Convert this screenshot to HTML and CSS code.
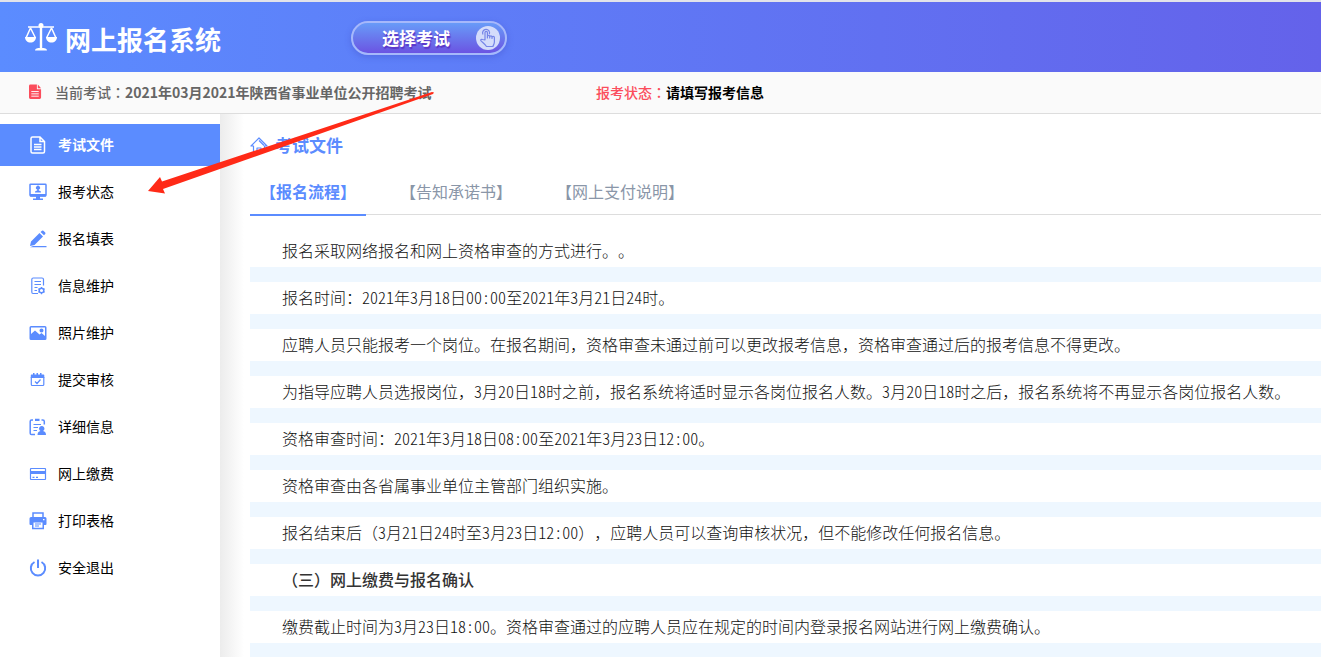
FILE: index.html
```html
<!DOCTYPE html>
<html lang="zh-CN">
<head>
<meta charset="utf-8">
<title>网上报名系统</title>
<link rel="stylesheet" href="styles.css">
</head>
<body>
<header class="header">
  <svg class="logo" viewBox="0 0 34 30" fill="none" stroke="#fff" stroke-width="1.6" aria-hidden="true">
    <path d="M4 5h26M6.500 6L2 16M6.500 6l5 10M27.500 6l-5 10M27.500 6L32 16" stroke-width="1.500"/>
    <path d="M17 3v24" stroke-width="2.400"/>
    <circle cx="17" cy="3.500" r="2.500" fill="#fff" stroke="none"/>
    <path d="M1 15h11c0 3.500-2.500 5.500-5.500 5.500S1 18.500 1 15zM22 15h11c0 3.500-2.500 5.500-5.500 5.500S22 18.500 22 15zM11 28.500c0-2 2-2.500 6-2.500s6 .5 6 2.500z" fill="#fff" stroke="none"/>
  </svg>
  <h1 class="system-name">网上报名系统</h1>
  <button class="choose" type="button">
    <span>选择考试</span>
    <svg class="choose-icon" viewBox="0 0 24 24" fill="none" stroke="#7585e8" stroke-width="1.200" stroke-linejoin="round" aria-hidden="true">
      <circle cx="12" cy="12" r="12" fill="#d4dcfb" stroke="none"/>
      <path d="M9 14V6.500a1.200 1.200 0 0 1 2.400 0V12V10.500a1.100 1.100 0 0 1 2.300 0V12v-1a1.100 1.100 0 0 1 2.300 0v1.500-1a1.100 1.100 0 0 1 2.400 0V16c0 2-1 3-1.500 4.500H10.500C9 18 6.500 16.500 4.800 14.700c-.5-1 .8-1.700 1.700-1.200z"/>
      <path d="M7 8.500a3.500 3.500 0 1 1 6.300-.3"/>
    </svg>
  </button>
</header>

<section class="status-bar">
  <svg class="status-icon" viewBox="0 0 14 16" aria-hidden="true">
    <path fill="#fb4d5c" d="M2 0h6.500v5H13v9a1.500 1.500 0 0 1-1.500 1.500h-10A1.500 1.500 0 0 1 0 14V1.500A1.500 1.500 0 0 1 1.500 0zM9.500 0L13 4H9.500z"/>
    <path d="M2.500 7.500h8M2.500 10h8M2.500 12.500h8" stroke="#fff"/>
  </svg>
  <p class="current"><span class="label">当前考试<span lang="zh-TW">：</span></span><strong>2021年03月2021年陕西省事业单位公开招聘考试</strong></p>
  <p class="state"><span class="label">报考状态<span lang="zh-TW">：</span></span><strong>请填写报考信息</strong></p>
</section>

<div class="body">
  <nav class="sidebar">
    <a class="item active" href="#"><svg viewBox="0 0 18 18"><path class="line" d="M2 2.500Q2 1 3.500 1H11l4.500 4.500v10q0 1.500-1.500 1.500H3.500Q2 17 2 15.500zM11 1v4.500h4.500M5 8.500h7.500M5 11h7.500M5 13.500h7.500"/></svg>考试文件</a>
    <a class="item" href="#"><svg viewBox="0 0 18 18"><path class="line" d="M1.700 1.200h14.600q.7 0 .7.700v10q0 1-1 1H2q-1 0-1-1v-10q0-.7.700-.7z"/><path d="M1 11h16v2.500H1zM7 13h4v2.500H7zM4 15.500h10V17H4zM6 9.500c0-1.500 1-1.800 2.200-2V6.500a2 2 0 1 1 1.600 0v1c1.200.2 2.200.5 2.200 2z"/></svg>报考状态</a>
    <a class="item" href="#"><svg viewBox="0 0 18 18"><path d="M1 16l1-4.500L10.500 3l3.500 3.500L5.500 15zM11.500 2L13 .7q.7-.6 1.400 0l1.800 1.800q.6.700 0 1.400L15 5.300zM4 16h13.500v1.200H1z"/></svg>报名填表</a>
    <a class="item" href="#"><svg viewBox="0 0 18 18"><path class="thin" d="M9 16.500H4Q2.800 16.500 2.800 15V2.500Q2.800 1 4.200 1H13q1.500 0 1.500 1.500v6M5.500 4.500H12M5.500 7.500H12M5.500 10.500h3M5.500 13.500H8"/><circle class="line" cx="12.500" cy="13.500" r="2.300"/><path class="thin" d="M12.500 9.900v1.500M12.500 15.700v1.500M9.300 11.700l1.300.7M14.400 14.600l1.300.7M9.300 15.300l1.300-.7M14.400 12.400l1.300-.7"/></svg>信息维护</a>
    <a class="item" href="#"><svg viewBox="0 0 18 18"><path fill-rule="evenodd" d="M2 2h14q1.500 0 1.500 1.500v11q0 1.500-1.500 1.500H2Q.5 16 .5 14.500v-11Q.5 2 2 2zM2 3.500V10l4-3.500 4.500 4L12.500 9 16 12V3.500zM12.500 4.500a2 2 0 1 1 0 4 2 2 0 0 1 0-4z"/></svg>照片维护</a>
    <a class="item" href="#"><svg viewBox="0 0 18 18"><path d="M2.500 3.500H4V2h1.500v1.500h2V2H9v1.500h2V2h1.500v1.500h2q.8 0 .8.800V7H1.800V4.300q0-.8.700-.8z"/><path class="thin" d="M2.300 6v7.500q0 1 1 1h10.500q1 0 1-1V6M6 10.500l2 2 3.500-4"/></svg>提交审核</a>
    <a class="item" href="#"><svg viewBox="0 0 18 18"><path class="line" d="M4 2H2.500Q1.200 2 1.200 3.500v11.700q0 1.300 1.300 1.300H6M12.500 2h1.300q1.500 0 1.500 1.500v3"/><path class="thin" d="M4.500 6.500h7.500M4.500 9.500H9M4.500 12.500H8"/><path d="M6 .8h4.500V3H6zM8.500 17c0-2.500 1-3.500 3-4a2.700 2.700 0 1 1 2.500 0c2 .5 3 1.500 3 4z"/></svg>详细信息</a>
    <a class="item" href="#"><svg viewBox="0 0 18 18"><path class="thin" d="M2 3.500h14q.5 0 .5.500v10q0 .5-.5.500H2q-.5 0-.5-.5V4q0-.5.500-.5zM3.500 12.300h2M7 12.300h2"/><path d="M1.500 6h15v3h-15z"/></svg>网上缴费</a>
    <a class="item" href="#"><svg viewBox="0 0 18 18"><path class="line" d="M4 6V1h10v5"/><path fill-rule="evenodd" d="M2 5h14q1.500 0 1.500 1.500V12q0 1-1 1H15v4.200H3V13H1.500q-1 0-1-1V6.500Q.5 5 2 5zM4.500 10.500v5.300h9v-5.300zM14 7v1.300h1.500V7z"/><path class="thin" d="M6 12h6M6 14h4"/></svg>打印表格</a>
    <a class="item" href="#"><svg viewBox="0 0 18 18"><path class="bold" d="M5.500 3a7.200 7.200 0 1 0 7 0M9 .5v8.500"/></svg>安全退出</a>
  </nav>

  <main class="main">
    <h2 class="title">
      <svg viewBox="0 0 18 16" fill="none" stroke="#5b8cff" stroke-width="1.200" stroke-linejoin="round" aria-hidden="true"><path d="M9 1L1 9h2.500v6H7v-4h4v4h3.500V9H17zM9 3.500l5 5"/></svg>
      考试文件
    </h2>
    <div class="tabs">
      <a class="tab selected" href="#">【报名流程】</a>
      <a class="tab" href="#">【告知承诺书】</a>
      <a class="tab" href="#">【网上支付说明】</a>
    </div>
    <article class="article">
      <p>报名采取网络报名和网上资格审查的方式进行。。</p>
      <p>报名时间：<span class="num">2021</span>年<span class="num">3</span>月<span class="num">18</span>日<span class="num">00:00</span>至<span class="num">2021</span>年<span class="num">3</span>月<span class="num">21</span>日<span class="num">24</span>时。</p>
      <p>应聘人员只能报考一个岗位。在报名期间，资格审查未通过前可以更改报考信息，资格审查通过后的报考信息不得更改。</p>
      <p>为指导应聘人员选报岗位，<span class="num">3</span>月<span class="num">20</span>日<span class="num">18</span>时之前，报名系统将适时显示各岗位报名人数。<span class="num">3</span>月<span class="num">20</span>日<span class="num">18</span>时之后，报名系统将不再显示各岗位报名人数。</p>
      <p>资格审查时间：<span class="num">2021</span>年<span class="num">3</span>月<span class="num">18</span>日<span class="num">08:00</span>至<span class="num">2021</span>年<span class="num">3</span>月<span class="num">23</span>日<span class="num">12:00</span>。</p>
      <p>资格审查由各省属事业单位主管部门组织实施。</p>
      <p>报名结束后（<span class="num">3</span>月<span class="num">21</span>日<span class="num">24</span>时至<span class="num">3</span>月<span class="num">23</span>日<span class="num">12:00</span>），应聘人员可以查询审核状况，但不能修改任何报名信息。</p>
      <p><strong>（三）网上缴费与报名确认</strong></p>
      <p>缴费截止时间为<span class="num">3</span>月<span class="num">23</span>日<span class="num">18:00</span>。资格审查通过的应聘人员应在规定的时间内登录报名网站进行网上缴费确认。</p>
    </article>
  </main>
</div>

<svg class="arrow" viewBox="0 0 290 104" aria-hidden="true"><path fill="#ff2a17" d="M1 101L13 87l2 4.500L285 2l2 .5-1 1.500L16 99l2 4.500z"/></svg>
</body>
</html>
```
FILE: styles.css
```css
* { box-sizing: border-box; }

body {
  margin: 0;
  min-height: 100vh;
  display: flex;
  flex-direction: column;
  position: relative;
  overflow: hidden;
  background: #fff;
  color: #000;
  font-family: "Noto Sans CJK SC", sans-serif;
  font-size: 14px;
  line-height: 20px;
  text-spacing-trim: space-all;
}

h1, h2, p { margin: 0; }
a { color: inherit; text-decoration: none; }

.header {
  display: flex;
  align-items: center;
  height: 72px;
  padding: 2px 0 0 24px;
  border-top: 2px solid #e2e3ea;
  background: linear-gradient(90deg, #5b8cff, #6462ea) padding-box;
}

.logo { width: 34px; height: 30px; margin-bottom: 2px; }

.system-name {
  width: 160px;
  margin-left: 7px;
  padding-top: 2px;
  color: #fff;
  font-size: 26px;
  line-height: 36px;
  white-space: nowrap;
}

.choose {
  display: flex;
  align-items: center;
  justify-content: space-between;
  width: 156px;
  height: 34px;
  margin-left: 126px;
  padding: 0 5px 0 29px;
  border: 2px solid #a6b8fb;
  border-radius: 17px;
  background: linear-gradient(#689bf8, #6b54e2) padding-box;
  box-shadow: 0 2px 6px rgba(60, 70, 190, 0.35);
  color: #fff;
  font: bold 17px/24px "Noto Sans CJK SC", sans-serif;
  text-shadow: 1px 2px 1px #5a35c8;
}

.choose-icon { width: 24px; height: 24px; }

.status-bar {
  display: flex;
  align-items: center;
  height: 42px;
  padding: 0 0 2px 29px;
  border-bottom: 1px solid #ddd;
  background: #fafafa;
}

.status-icon { width: 13px; height: 16px; }
.label { font-weight: 500; }
.label span { font-family: "Noto Sans CJK TC", sans-serif; }
.current { width: 554px; padding-left: 13px; color: #666; }
.state .label { color: #fb4d5c; }

.body { display: flex; flex: 1; }

.sidebar {
  display: flex;
  flex-direction: column;
  gap: 5px;
  width: 220px;
  flex-shrink: 0;
  padding-top: 10px;
}

.item {
  display: flex;
  align-items: center;
  gap: 11px;
  height: 42px;
  padding: 0 0 2px 29px;
}

.item svg { width: 18px; height: 18px; margin-top: 2px; fill: #5b8cff; stroke: none; }
.item .line, .item .thin, .item .bold { fill: none; stroke: #5b8cff; stroke-width: 1.5; }
.item .thin { stroke-width: 1.2; }
.item .bold { stroke-width: 2; }
.item.active { background: #5b8cff; color: #fff; font-weight: bold; }
.item.active .line { stroke: #fff; }

.main {
  flex: 1;
  min-width: 0;
  padding: 19px 0 0 30px;
  background: linear-gradient(90deg, #ececec, #fff 24px);
}

.title {
  display: flex;
  align-items: center;
  gap: 7px;
  color: #5b8cff;
  font-size: 17px;
  line-height: 24px;
}

.title svg { width: 18px; height: 16px; }

.tabs {
  display: flex;
  gap: 24px;
  height: 44px;
  margin-top: 14px;
  border-bottom: 1px solid #ddd;
}

.tab {
  height: 45px;
  padding: 0 10px;
  color: #8a96a8;
  font-size: 16px;
  line-height: 40px;
}

.tab.selected {
  border-bottom: 2px solid #5b8cff;
  color: #5b8cff;
  font-weight: bold;
}

.article {
  padding-top: 20px;
  color: #111;
  font-size: 16px;
  line-height: 30px;
}

.article p {
  padding: 0 0 2px 32px;
  border-bottom: 15px solid #eef7ff;
  font-weight: 300;
}

.article strong { color: #333; font-weight: 500; }
.num { font-feature-settings: "hwid"; }

.arrow {
  position: absolute;
  left: 147px;
  top: 90px;
  width: 290px;
  height: 104px;
  pointer-events: none;
}
```
